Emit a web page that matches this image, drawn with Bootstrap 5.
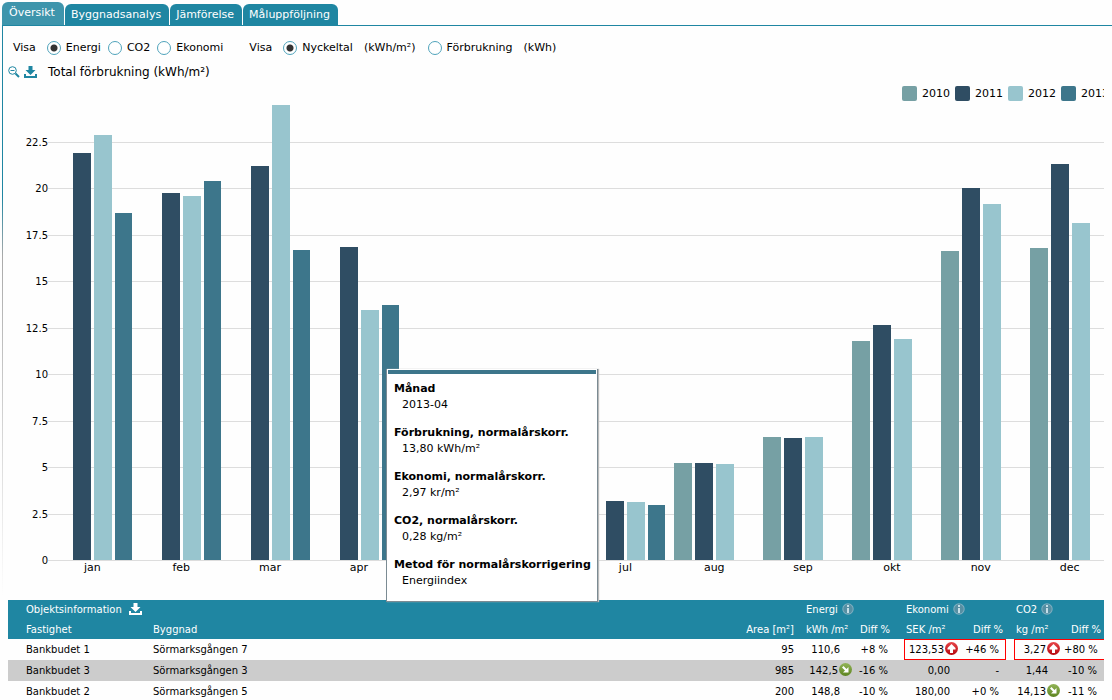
<!DOCTYPE html>
<html lang="sv">
<head>
<meta charset="utf-8">
<meta name="viewport" content="width=device-width, initial-scale=1">
<title>Översikt</title>
<link href="https://cdn.jsdelivr.net/npm/bootstrap@5.3.0/dist/css/bootstrap.min.css" rel="stylesheet">
<style>
  :root { --teal: #1f86a2; --c2010: #76a0a4; --c2011: #2f4d63; --c2012: #98c5ce; --c2013: #3d768b; }
  body { font: 11px/16px "DejaVu Sans", Verdana, sans-serif; color: #000; background: #fefefe; overflow-x: hidden; }
  h1 { font-size: 12px; font-weight: 400; margin: 0; line-height: 16px; }

  /* Tabs */
  .page-tabs { border: 0; padding: 2px 0 0 2px; gap: 1px; height: 25px; width: 338px; flex-wrap: nowrap; align-items: flex-end; }
  .page-tabs .nav-link { background: var(--teal); color: #fff; border: 0; margin: 0; border-radius: 6px 6px 0 0; padding: 3px 6px 2px; line-height: 16px; white-space: nowrap; height: 21px; }
  .page-tabs .nav-link.active { background: #3e95ac; color: #fff; height: 23px; padding: 3px 7px 4px; }
  .page-tabs .nav-item { flex: 1 1 auto; }

  .tab-panel { margin-left: 2px; border-top: 1px solid var(--teal); padding: 12px 8px 0 6px; background: linear-gradient(var(--teal) 0, var(--teal) 170px, #aaa 230px, #fefefe 570px) left top / 1px 100% no-repeat; }
  .view-options { padding-left: 5px; height: 20px; }
  .view-options span { margin-right: 11px; }
  .view-options label { margin-right: 7px; white-space: pre; }
  .view-options .form-check-input { width: 14px; height: 14px; margin: 0 5px 0 0; border: 1px solid #4fa3bb; background: #fff; flex: none; }
  .view-options .form-check-input:checked { background: radial-gradient(circle at center, #333 0 3px, #fff 4px); border-color: #4fa3bb; }
  .view-options .group-end { margin-right: 26px; }
  .view-options .wide-end { margin-right: 12px; }
  .unit { padding-left: 4px; }
  .title-row { padding-top: 6px; color: var(--teal); }
  .title-row h1 { color: #000; margin-left: 11px; }
  .tool-btn { line-height: 0; border: 0; padding: 0; background: none; color: inherit; height: 16px; }

  /* Chart */
  .chart-clip { overflow: hidden; }
  .legend-row { margin: 6px -9px 0 0; gap: 5px; height: 15px; padding-right: 4px; }
  .legend-row i { width: 15px; height: 15px; border-radius: 2px; }
  .chart-area { display: grid; grid-template-columns: 40px 1fr; margin: -6px -10px 0 0; }
  .ticks, .gridlines, .bars { display: grid; height: 465px; }
  .ticks, .gridlines { grid-template-rows: repeat(10, 1fr); }
  .ticks { grid-area: 1 / 1; font-size: 10px; }
  .ticks span { text-align: right; align-self: end; margin-bottom: -9px; }
  .gridlines, .bars { grid-area: 1 / 2; }
  .gridlines div { border-bottom: 1px solid #ddd; margin-bottom: -1px; }
  .bars, .months { grid-template-columns: repeat(12, 1fr); }
  .group { display: grid; grid-template-columns: 18px 18px 18px 17px; column-gap: 3px; justify-content: center; align-items: end; height: 100%; }
  .group b { height: calc(var(--v) * 4%); grid-row: 1; }
  .y0 { background: var(--c2010); grid-column: 1; }
  .y1 { background: var(--c2011); grid-column: 2; }
  .y2 { background: var(--c2012); grid-column: 3; }
  .y3 { background: var(--c2013); grid-column: 4; }
  .months { display: grid; grid-area: 2 / 2; text-align: center; height: 40px; }

  .tip { position: absolute; left: 378px; bottom: -2px; width: 212px; background: #fff; border: 1px solid #7b8b93; border-top: 0; box-shadow: 1px 0 1px #bbb; padding: 1px 1px 0; z-index: 2; }
  .tip dl { border-top: 4px solid var(--c2013); margin: 0; padding: 7px 0 0 6px; }
  .tip dt { font-weight: 700; white-space: nowrap; }
  .tip dd { margin: 0 0 12px 8px; }

  /* Object table */
  .obj-table { width: 100%; table-layout: fixed; margin: 0; font-size: 10px; }
  .obj-table th, .obj-table td { padding: 0; height: 21px; line-height: 16px; white-space: nowrap; vertical-align: middle; font-weight: 400; }
  .obj-table thead { background: var(--teal); color: #fff; }
  .obj-table thead tr:first-child th { height: 20px; }
  .obj-table thead tr:last-child th { height: 19px; }
  .obj-table tbody tr:nth-child(even) { background: #ccc; }
  .obj-table .first { padding-left: 18px; }
  .obj-table .hd { padding-left: 2px; }
  .obj-table .hd-diff { padding-left: 4px; }
  .obj-table .hd-right { text-align: right; padding-right: 3px; }
  .obj-table .area { text-align: right; padding-right: 10px; }
  .obj-table .val { text-align: right; padding-right: 16px; }
  .obj-table .val-sek { text-align: right; padding-right: 12px; }
  .obj-table .flagged { text-align: right; padding-right: 4px; }
  .obj-table .diff { text-align: right; padding-right: 16px; }
  .obj-table .diff-narrow { text-align: right; padding-right: 7px; }
  .alert-start { box-shadow: inset 1px 0 red, inset 0 1px red, inset 0 -1px red; }
  .alert-mid { box-shadow: inset 0 1px red, inset 0 -1px red; }
  .alert-end { box-shadow: inset -1px 0 red, inset 0 1px red, inset 0 -1px red; }
  svg { vertical-align: middle; }
  .obj-table svg { margin: -2px 0 0 1px; }
</style>
</head>
<body>
<svg width="0" height="0" class="position-absolute" aria-hidden="true">
  <defs>
    <linearGradient id="gr" x2="0" y2="1"><stop stop-color="#e8474b"/><stop offset="1" stop-color="#b5060d"/></linearGradient>
    <linearGradient id="gg" x2="0" y2="1"><stop stop-color="#92b457"/><stop offset="1" stop-color="#5d8420"/></linearGradient>
    <symbol id="dl" viewBox="0 0 13 12"><path d="M4.500 0h4v4h3l-5 5-5-5h3zM0 8h2v2h9V8h2v4H0z" fill="currentColor"/></symbol>
    <symbol id="info" viewBox="0 0 12 12"><circle cx="6" cy="6" r="5.700" fill="#7fb0c1"/><circle cx="6" cy="6" r="4.700" fill="#568fa3"/><path d="M5 2h2v2H5zM5 5h2v5H5z" fill="#c5dfe8"/></symbol>
    <symbol id="up" viewBox="0 0 13 13"><circle cx="6.500" cy="6.500" r="6.500" fill="url(#gr)"/><path d="M6.500 2 10.500 6v1.500H8V11H5V7.500H2.500V6z" fill="#fff"/></symbol>
    <symbol id="down" viewBox="0 0 13 13"><circle cx="6.500" cy="6.500" r="6.500" fill="url(#gg)"/><path d="M3 4.500 4.500 3 7.500 6 9.500 4v5.500H4l2-2z" fill="#fff"/></symbol>
  </defs>
</svg>

<ul class="nav nav-tabs page-tabs">
  <li class="nav-item"><a class="nav-link active" href="#">Översikt</a></li>
  <li class="nav-item"><a class="nav-link" href="#">Byggnadsanalys</a></li>
  <li class="nav-item"><a class="nav-link" href="#">Jämförelse</a></li>
  <li class="nav-item"><a class="nav-link" href="#">Måluppföljning</a></li>
</ul>

<main class="tab-panel">
  <form class="view-options d-flex align-items-center">
    <span>Visa</span>
    <input class="form-check-input" type="radio" name="kind" id="k1" checked><label for="k1">Energi</label>
    <input class="form-check-input" type="radio" name="kind" id="k2"><label for="k2">CO2</label>
    <input class="form-check-input" type="radio" name="kind" id="k3"><label for="k3" class="group-end">Ekonomi</label>
    <span>Visa</span>
    <input class="form-check-input" type="radio" name="unit" id="u1" checked><label for="u1" class="wide-end">Nyckeltal  <bdi class="unit">(kWh/m²)</bdi></label>
    <input class="form-check-input" type="radio" name="unit" id="u2"><label for="u2">Förbrukning  <bdi class="unit">(kWh)</bdi></label>
  </form>
  <div class="title-row d-flex align-items-center">
    <button class="tool-btn me-1" type="button" aria-label="Zooma ut"><svg width="12" height="12" viewBox="0 0 12 12" fill="none" stroke="currentColor"><circle cx="4.500" cy="4.500" r="3.800"/><path d="M2.500 4.500h4"/><path d="M7.500 7.500 11 11" stroke-width="2"/></svg></button>
    <button class="tool-btn" type="button" aria-label="Ladda ner"><svg width="13" height="12"><use href="#dl"/></svg></button>
    <h1>Total förbrukning (kWh/m²)</h1>
  </div>

  <section class="position-relative">
    <div class="chart-clip">
      <div class="legend-row d-flex justify-content-end align-items-center">
        <i class="y0"></i><span>2010</span><i class="y1"></i><span>2011</span><i class="y2"></i><span>2012</span><i class="y3"></i><span>2013</span>
      </div>
      <div class="chart-area">
        <div class="ticks"><span>22.5</span><span>20</span><span>17.5</span><span>15</span><span>12.5</span><span>10</span><span>7.5</span><span>5</span><span>2.5</span><span>0</span></div>
        <div class="gridlines"><div></div><div></div><div></div><div></div><div></div><div></div><div></div><div></div><div></div><div></div></div>
        <div class="bars">
          <div class="group"><b class="y1" style="--v:21.9"></b><b class="y2" style="--v:22.85"></b><b class="y3" style="--v:18.66"></b></div>
          <div class="group"><b class="y1" style="--v:19.73"></b><b class="y2" style="--v:19.57"></b><b class="y3" style="--v:20.38"></b></div>
          <div class="group"><b class="y1" style="--v:21.18"></b><b class="y2" style="--v:24.46"></b><b class="y3" style="--v:16.67"></b></div>
          <div class="group"><b class="y1" style="--v:16.83"></b><b class="y2" style="--v:13.44"></b><b class="y3" style="--v:13.71"></b></div>
          <div class="group"></div>
          <div class="group"></div>
          <div class="group"><b class="y1" style="--v:3.17"></b><b class="y2" style="--v:3.12"></b><b class="y3" style="--v:2.96"></b></div>
          <div class="group"><b class="y0" style="--v:5.22"></b><b class="y1" style="--v:5.22"></b><b class="y2" style="--v:5.16"></b></div>
          <div class="group"><b class="y0" style="--v:6.61"></b><b class="y1" style="--v:6.56"></b><b class="y2" style="--v:6.61"></b></div>
          <div class="group"><b class="y0" style="--v:11.77"></b><b class="y1" style="--v:12.63"></b><b class="y2" style="--v:11.88"></b></div>
          <div class="group"><b class="y0" style="--v:16.61"></b><b class="y1" style="--v:20"></b><b class="y2" style="--v:19.14"></b></div>
          <div class="group"><b class="y0" style="--v:16.77"></b><b class="y1" style="--v:21.29"></b><b class="y2" style="--v:18.12"></b></div>
        </div>
        <div class="months"><span>jan</span><span>feb</span><span>mar</span><span>apr</span><span></span><span></span><span>jul</span><span>aug</span><span>sep</span><span>okt</span><span>nov</span><span>dec</span></div>
      </div>
    </div>
    <div class="tip" role="tooltip">
      <dl>
        <dt>Månad</dt><dd>2013-04</dd>
        <dt>Förbrukning, normalårskorr.</dt><dd>13,80 kWh/m²</dd>
        <dt>Ekonomi, normalårskorr.</dt><dd>2,97 kr/m²</dd>
        <dt>CO2, normalårskorr.</dt><dd>0,28 kg/m²</dd>
        <dt>Metod för normalårskorrigering</dt><dd>Energiindex</dd>
      </dl>
    </div>
  </section>

  <table class="obj-table">
    <colgroup><col style="width:145px"><col><col style="width:90px"><col style="width:52px"><col style="width:48px"><col style="width:58px"><col style="width:44px"><col style="width:8px"><col style="width:50px"><col style="width:40px"></colgroup>
    <thead>
      <tr>
        <th class="first" colspan="3">Objektsinformation &nbsp;<svg width="13" height="12"><use href="#dl"/></svg></th>
        <th class="hd" colspan="2">Energi <svg width="12" height="12"><use href="#info"/></svg></th>
        <th class="hd" colspan="3">Ekonomi <svg width="12" height="12"><use href="#info"/></svg></th>
        <th class="hd" colspan="2">CO2 <svg width="12" height="12"><use href="#info"/></svg></th>
      </tr>
      <tr>
        <th class="first">Fastighet</th><th>Byggnad</th><th class="area">Area [m²]</th>
        <th class="hd">kWh /m²</th><th class="hd-diff">Diff %</th>
        <th class="hd">SEK /m²</th><th class="hd-right">Diff %</th><th></th>
        <th class="hd">kg /m²</th><th class="hd-right">Diff %</th>
      </tr>
    </thead>
    <tbody>
      <tr>
        <td class="first">Bankbudet 1</td><td>Sörmarksgången 7</td><td class="area">95</td>
        <td class="val">110,6</td><td class="diff">+8 %</td>
        <td class="flagged alert-start">123,53<svg width="13" height="13"><use href="#up"/></svg></td><td class="diff-narrow alert-end">+46 %</td><td></td>
        <td class="flagged alert-start">3,27<svg width="13" height="13"><use href="#up"/></svg></td><td class="diff-narrow alert-mid">+80 %</td>
      </tr>
      <tr>
        <td class="first">Bankbudet 3</td><td>Sörmarksgången 3</td><td class="area">985</td>
        <td class="flagged">142,5<svg width="13" height="13"><use href="#down"/></svg></td><td class="diff">-16 %</td>
        <td class="val-sek">0,00</td><td class="diff-narrow">-</td><td></td>
        <td class="val">1,44</td><td class="diff-narrow">-10 %</td>
      </tr>
      <tr>
        <td class="first">Bankbudet 2</td><td>Sörmarksgången 5</td><td class="area">200</td>
        <td class="val">148,8</td><td class="diff">-10 %</td>
        <td class="val-sek">180,00</td><td class="diff-narrow">+0 %</td><td></td>
        <td class="flagged">14,13<svg width="13" height="13"><use href="#down"/></svg></td><td class="diff-narrow">-11 %</td>
      </tr>
    </tbody>
  </table>
</main>
<script src="https://cdn.jsdelivr.net/npm/bootstrap@5.3.0/dist/js/bootstrap.bundle.min.js"></script>
</body>
</html>
